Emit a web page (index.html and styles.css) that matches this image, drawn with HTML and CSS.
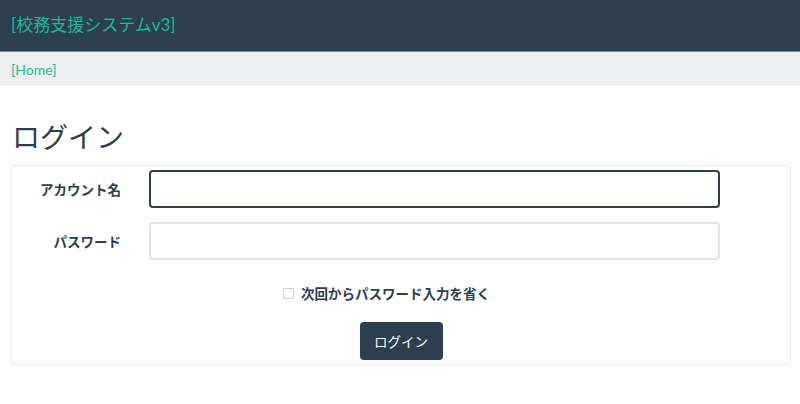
FILE: index.html
```html
<!DOCTYPE html>
<html lang="ja">
<head>
    <meta charset="UTF-8">
    <title>ログイン</title>
    <link rel="stylesheet" href="styles.css">
</head>
<body>
    <div class="navbar">
        <a href="#" class="brand">[校務支援システムv3]</a>
    </div>
    <div class="crumb">
        <a href="#">[Home]</a>
    </div>
    <div class="main">
        <h1 class="title">ログイン</h1>
        <form class="panel">
            <div class="row">
                <label class="lbl" for="user">アカウント名</label>
                <input type="text" id="user" class="inp" autofocus>
            </div>
            <div class="row">
                <label class="lbl" for="pass">パスワード</label>
                <input type="password" id="pass" class="inp">
            </div>
            <div class="check">
                <label><input type="checkbox"> 次回からパスワード入力を省く</label>
            </div>
            <div class="act">
                <button type="button" class="btn">ログイン</button>
            </div>
        </form>
    </div>
</body>
</html>
```

FILE: styles.css
```css
*{
    margin: 0;
    padding: 0;
    box-sizing: border-box;
}
body{
    font-family: Lato, "Noto Sans CJK JP", sans-serif;
    color: #2c3e50;
    background: #fff;
    font-size: 14px;
}
a{
    color: #18bc9c;
    text-decoration: none;
}
.navbar{
    height: 52px;
    background: #2c3e50;
    border-bottom: 1px solid #7b8794;
    padding: 0 11px;
    display: flex;
    align-items: center;
}
.brand{
    font-size: 17px;
    line-height: 1;
    margin-top: -2px;
}
.crumb{
    height: 34px;
    background: #ecf0f1;
    padding: 0 11px;
    display: flex;
    align-items: center;
    font-size: 14px;
}
.main{
    padding: 0 9px 0 11px;
}
.title{
    font-size: 28px;
    font-weight: normal;
    line-height: 1;
    margin: 37px 0 14px 1px;
}
.panel{
    border: 1px solid #ecf0f1;
    border-radius: 3px;
    padding: 4px 0 4px;
}
.row{
    display: flex;
    align-items: center;
    margin-bottom: 14px;
}
.lbl{
    width: 109px;
    text-align: right;
    font-weight: bold;
    font-size: 13.5px;
    margin-right: 28px;
}
.inp{
    width: 571px;
    height: 38px;
    border: 2px solid #dce4ec;
    border-radius: 4px;
    padding: 0 12px;
    font-size: 15px;
    font-family: inherit;
    color: #2c3e50;
    caret-color: #2c3e50;
    outline: none;
}
.inp:focus{
    border-color: #2c3e50;
}
.check{
    padding-left: 271px;
    margin-top: 23px;
    font-weight: bold;
    font-size: 13.5px;
}
.check label{
    display: flex;
    align-items: center;
}
.check input{
    appearance: none;
    -webkit-appearance: none;
    width: 11px;
    height: 11px;
    margin-right: 7px;
    border: 1px solid #c8ced3;
    border-radius: 2px;
    background: #fff;
}
.act{
    text-align: center;
    margin-top: 19px;
}
.btn{
    background: #2c3e50;
    color: #fff;
    border: none;
    border-radius: 4px;
    width: 83px;
    height: 38px;
    font-size: 13.5px;
    font-family: inherit;
}
```
